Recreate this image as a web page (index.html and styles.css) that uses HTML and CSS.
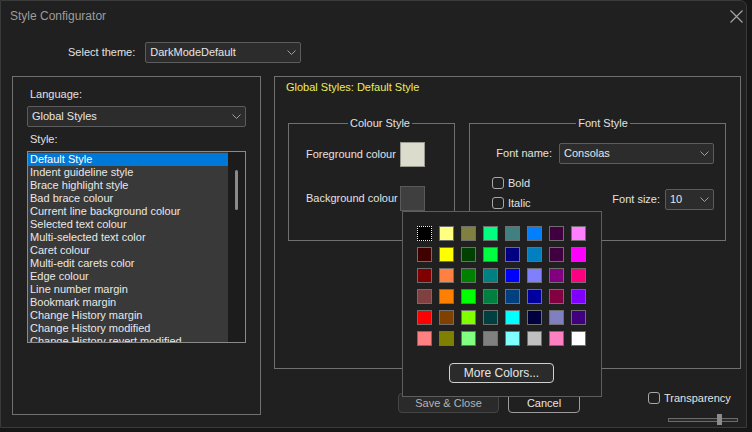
FILE: index.html
```html
<!DOCTYPE html>
<html lang="en">
<head>
    <meta charset="UTF-8">
    <meta name="viewport" content="width=device-width, initial-scale=1.0">
    <title>Style Configurator</title>
    <link rel="stylesheet" href="styles.css">
</head>
<body>
    <div class="window">
        <div class="titlebar">
            <span class="title">Style Configurator</span>
            <svg class="close-icon" width="13" height="13" viewBox="0 0 13 13">
                <path d="M0.5 0.5L12.5 12.5M12.5 0.5L0.5 12.5" stroke="#a8a8a8" stroke-width="1.1" fill="none"/>
            </svg>
        </div>

        <div class="theme-row">
            <span class="theme-label">Select theme:</span>
            <div class="combo theme-combo">
                <span>DarkModeDefault</span>
                <svg class="chevron" width="9" height="5" viewBox="0 0 9 5"><path d="M0.5 0.5L4.5 4.5L8.5 0.5" stroke="#a0a0a0" fill="none"/></svg>
            </div>
        </div>

        <div class="main">
            <div class="group left-group">
                <div class="field-label">Language:</div>
                <div class="combo lang-combo">
                    <span>Global Styles</span>
                    <svg class="chevron" width="9" height="5" viewBox="0 0 9 5"><path d="M0.5 0.5L4.5 4.5L8.5 0.5" stroke="#a0a0a0" fill="none"/></svg>
                </div>
                <div class="field-label style-label">Style:</div>
                <div class="listbox">
                    <ul class="list-items">
                        <li class="selected">Default Style</li>
                        <li>Indent guideline style</li>
                        <li>Brace highlight style</li>
                        <li>Bad brace colour</li>
                        <li>Current line background colour</li>
                        <li>Selected text colour</li>
                        <li>Multi-selected text color</li>
                        <li>Caret colour</li>
                        <li>Multi-edit carets color</li>
                        <li>Edge colour</li>
                        <li>Line number margin</li>
                        <li>Bookmark margin</li>
                        <li>Change History margin</li>
                        <li>Change History modified</li>
                        <li>Change History revert modified</li>
                    </ul>
                    <div class="scrollbar"><div class="scroll-thumb"></div></div>
                </div>
            </div>

            <div class="right-col">
                <div class="group right-group">
                    <div class="style-title">Global Styles: Default Style</div>
                    <div class="subgroups">
                        <fieldset class="colour-style">
                            <legend>Colour Style</legend>
                            <div class="colour-grid">
                                <span>Foreground colour</span>
                                <div class="swatch fg-swatch"></div>
                                <span>Background colour</span>
                                <div class="swatch bg-swatch"></div>
                            </div>
                        </fieldset>
                        <fieldset class="font-style">
                            <legend>Font Style</legend>
                            <div class="font-row">
                                <span>Font name:</span>
                                <div class="combo font-combo">
                                    <span>Consolas</span>
                                    <svg class="chevron" width="9" height="5" viewBox="0 0 9 5"><path d="M0.5 0.5L4.5 4.5L8.5 0.5" stroke="#a0a0a0" fill="none"/></svg>
                                </div>
                            </div>
                            <div class="font-row2">
                                <div class="checks">
                                    <div class="check"><span class="box"></span>Bold</div>
                                    <div class="check"><span class="box"></span>Italic</div>
                                </div>
                                <div class="size-field">
                                    <span>Font size:</span>
                                    <div class="combo size-combo">
                                        <span>10</span>
                                        <svg class="chevron" width="9" height="5" viewBox="0 0 9 5"><path d="M0.5 0.5L4.5 4.5L8.5 0.5" stroke="#a0a0a0" fill="none"/></svg>
                                    </div>
                                </div>
                            </div>
                        </fieldset>
                    </div>
                </div>

                <div class="bottom-bar">
                    <button class="btn save-btn">Save &amp; Close</button>
                    <button class="btn cancel-btn">Cancel</button>
                    <div class="transparency">
                        <div class="check"><span class="box"></span>Transparency</div>
                        <div class="slider"><div class="slider-thumb"></div></div>
                    </div>
                </div>
            </div>
        </div>

        <div class="color-popup">
            <div class="palette">
                <div class="cell current" style="background:#000000"></div>
                <div class="cell" style="background:#ffff80"></div>
                <div class="cell" style="background:#808040"></div>
                <div class="cell" style="background:#00ff80"></div>
                <div class="cell" style="background:#408080"></div>
                <div class="cell" style="background:#0080ff"></div>
                <div class="cell" style="background:#400040"></div>
                <div class="cell" style="background:#ff80ff"></div>

                <div class="cell" style="background:#400000"></div>
                <div class="cell" style="background:#ffff00"></div>
                <div class="cell" style="background:#004000"></div>
                <div class="cell" style="background:#00ff40"></div>
                <div class="cell" style="background:#000080"></div>
                <div class="cell" style="background:#0080c0"></div>
                <div class="cell" style="background:#400040"></div>
                <div class="cell" style="background:#ff00ff"></div>

                <div class="cell" style="background:#800000"></div>
                <div class="cell" style="background:#ff8040"></div>
                <div class="cell" style="background:#008000"></div>
                <div class="cell" style="background:#008080"></div>
                <div class="cell" style="background:#0000ff"></div>
                <div class="cell" style="background:#8080ff"></div>
                <div class="cell" style="background:#800080"></div>
                <div class="cell" style="background:#ff0080"></div>

                <div class="cell" style="background:#804040"></div>
                <div class="cell" style="background:#ff8000"></div>
                <div class="cell" style="background:#00ff00"></div>
                <div class="cell" style="background:#008040"></div>
                <div class="cell" style="background:#004080"></div>
                <div class="cell" style="background:#0000a0"></div>
                <div class="cell" style="background:#800040"></div>
                <div class="cell" style="background:#8000ff"></div>

                <div class="cell" style="background:#ff0000"></div>
                <div class="cell" style="background:#804000"></div>
                <div class="cell" style="background:#80ff00"></div>
                <div class="cell" style="background:#004040"></div>
                <div class="cell" style="background:#00ffff"></div>
                <div class="cell" style="background:#000040"></div>
                <div class="cell" style="background:#8080c0"></div>
                <div class="cell" style="background:#400080"></div>

                <div class="cell" style="background:#ff8080"></div>
                <div class="cell" style="background:#808000"></div>
                <div class="cell" style="background:#80ff80"></div>
                <div class="cell" style="background:#808080"></div>
                <div class="cell" style="background:#80ffff"></div>
                <div class="cell" style="background:#c0c0c0"></div>
                <div class="cell" style="background:#ff80c0"></div>
                <div class="cell" style="background:#ffffff"></div>
            </div>
            <button class="more-btn">More Colors...</button>
        </div>
    </div>
</body>
</html>
```

FILE: styles.css
```css
* {
    margin: 0;
    padding: 0;
    box-sizing: border-box;
}
body {
    background: #161616;
    color: #e2e2e2;
    font-family: "Liberation Sans", Arial, sans-serif;
    font-size: 11px;
    line-height: 13px;
}
.window {
    position: relative;
    width: 747px;
    height: 428px;
    background: #202020;
    border: 1px solid #3a3a3a;
    border-top-right-radius: 7px;
}
.titlebar {
    height: 31px;
    display: flex;
    align-items: center;
    justify-content: space-between;
    padding: 0 3px 0 9px;
}
.title {
    font-size: 12px;
    color: #9c9c9c;
}
.close-icon {
    margin-top: -1px;
}
.theme-row {
    display: flex;
    align-items: center;
    gap: 10px;
    margin-top: 10px;
    padding-left: 67px;
}
.combo {
    height: 21px;
    display: flex;
    align-items: center;
    justify-content: space-between;
    padding: 0 4px 0 4px;
    background: #2c2c2c;
    border: 1px solid #5c5c5c;
    border-radius: 2px;
    color: #e6e6e6;
}
.theme-combo {
    width: 156px;
}
.main {
    display: flex;
    margin-top: 13px;
    padding-left: 11px;
}
.group {
    border: 1px solid #707070;
}
.left-group {
    width: 249px;
    height: 339px;
    padding: 11px 14px 0 14px;
}
.field-label {
    padding-left: 3px;
}
.lang-combo {
    margin-top: 5px;
}
.style-label {
    margin-top: 6px;
}
.listbox {
    margin-top: 5px;
    height: 192px;
    display: flex;
    border: 1px solid #8a8a8a;
    overflow: hidden;
}
.list-items {
    list-style: none;
    flex: 1;
    background: #393939;
    padding-top: 1px;
    white-space: nowrap;
    overflow: hidden;
}
.list-items li {
    height: 13px;
    padding-left: 2px;
    color: #e8e8e8;
}
.list-items li.selected {
    background: #0078d7;
    color: #ffffff;
}
.scrollbar {
    width: 17px;
    background: #1c1c1c;
    padding: 18px 0 0 7px;
}
.scroll-thumb {
    width: 3px;
    height: 40px;
    border-radius: 2px;
    background: #8a8a8a;
}
.right-col {
    margin-left: 13px;
    display: flex;
    flex-direction: column;
}
.right-group {
    width: 467px;
    height: 293px;
    padding-top: 4px;
}
.style-title {
    color: #ecec5c;
    padding-left: 11px;
}
.subgroups {
    display: flex;
    gap: 14px;
    margin-top: 22px;
    padding-left: 13px;
}
fieldset {
    border: 1px solid #707070;
    min-width: 0;
    height: 125px;
}
legend {
    margin: 0 auto;
    padding: 0 2px;
    line-height: 14px;
    color: #e2e2e2;
}
.colour-style {
    width: 167px;
    padding: 12px 0 0 17px;
}
.colour-grid {
    display: grid;
    grid-template-columns: 94px 25px;
    grid-auto-rows: 25px;
    row-gap: 19px;
    align-items: center;
}
.swatch {
    width: 25px;
    height: 25px;
    border: 1px solid #707070;
}
.fg-swatch {
    background: #dcdccc;
    border-color: #9a9a90;
}
.bg-swatch {
    background: #3f3f3f;
    border-color: #5a5a5a;
}
.font-style {
    width: 257px;
    padding: 13px 11px 0 22px;
}
.font-row {
    display: flex;
    align-items: center;
    justify-content: flex-end;
    gap: 7px;
}
.font-combo {
    width: 155px;
}
.font-row2 {
    display: flex;
    margin-top: 9px;
}
.check {
    display: flex;
    align-items: center;
    gap: 4px;
    height: 20px;
}
.box {
    width: 12px;
    height: 12px;
    border: 1px solid #a8a8a8;
    border-radius: 3px;
}
.size-field {
    margin-left: auto;
    margin-top: 13px;
    display: flex;
    align-items: center;
    gap: 5px;
}
.size-combo {
    width: 49px;
}
.bottom-bar {
    display: flex;
    margin-top: 23px;
    padding-left: 124px;
}
.btn {
    height: 20px;
    margin-top: 1px;
    font-family: "Liberation Sans", Arial, sans-serif;
    font-size: 11px;
    border-radius: 4px;
}
.save-btn {
    width: 101px;
    background: #2a2a2a;
    border: 1px solid #454545;
    color: #b4b4b4;
}
.cancel-btn {
    width: 72px;
    margin-left: 9px;
    background: #202020;
    border: 1px solid #9c9c9c;
    color: #e6e6e6;
}
.transparency {
    margin-left: 68px;
}
.transparency .check {
    height: 12px;
}
.slider {
    position: relative;
    width: 70px;
    height: 4px;
    margin: 14px 0 0 20px;
    border: 1px solid #6a6a6a;
    background: #2a2a2a;
}
.slider-thumb {
    position: absolute;
    left: 48px;
    top: -5px;
    width: 5px;
    height: 11px;
    background: #8c8c8c;
}
.color-popup {
    position: absolute;
    left: 401px;
    top: 210px;
    width: 200px;
    height: 186px;
    background: #202020;
    border: 1px solid #5e5e5e;
    padding: 14px 0 0 14px;
}
.palette {
    display: grid;
    grid-template-columns: repeat(8, 15px);
    grid-auto-rows: 15px;
    column-gap: 7px;
    row-gap: 6px;
}
.cell {
    border: 1px solid #6e6e6e;
}
.cell.current {
    border: 1px dotted #f0f0f0;
}
.more-btn {
    display: block;
    width: 105px;
    height: 20px;
    margin: 17px 0 0 32px;
    background: #2b2b2b;
    border: 1px solid #d0d0d0;
    border-radius: 4px;
    color: #e6e6e6;
    font-family: "Liberation Sans", Arial, sans-serif;
    font-size: 12px;
}
```
